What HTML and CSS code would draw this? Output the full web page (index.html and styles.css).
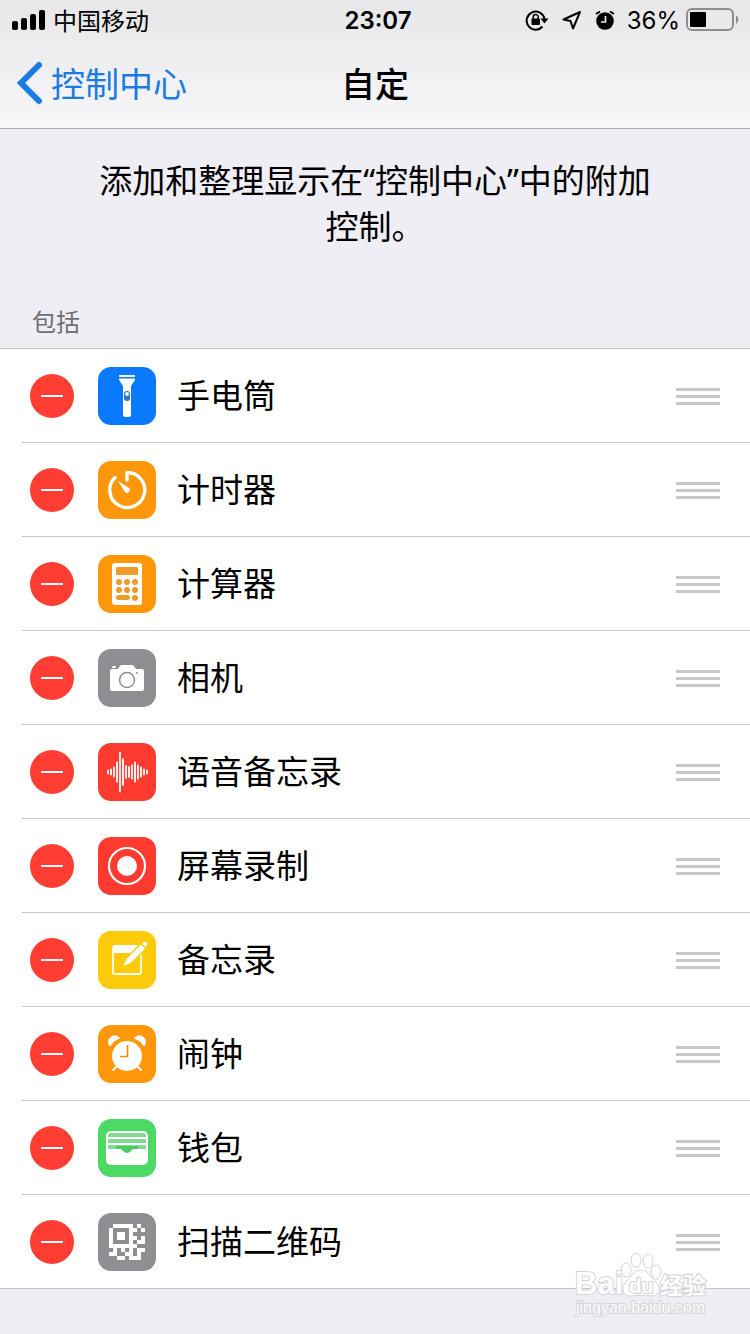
FILE: index.html
```html
<!DOCTYPE html>
<html lang="zh-CN">
<head>
<meta charset="utf-8">
<meta name="viewport" content="width=device-width, initial-scale=1">
<title>自定</title>
<link rel="stylesheet" href="styles.css">
</head>
<body>
<header class="header">
  <div class="status">
    <div class="status-left">
      <svg width="34" height="20" viewBox="0 0 34 20" aria-hidden="true"><rect x="0" y="11" width="6" height="9" rx="2"/><rect x="9" y="8" width="6" height="12" rx="2"/><rect x="18" y="4" width="6" height="16" rx="2"/><rect x="27" y="0" width="6" height="20" rx="2"/></svg>
      <span>中国移动</span>
    </div>
    <time class="clock">23:07</time>
    <div class="status-right">
      <svg width="24" height="22" viewBox="0 0 24 22" aria-hidden="true"><path d="M17.500 17.500A9 9 0 1 1 19.500 10" fill="none" stroke="#000" stroke-width="2"/><path d="M15.500 9.500h8l-4 5z"/><rect x="6.500" y="9.500" width="8.500" height="6.500" rx="1"/><path d="M8.200 10V8a2.500 2.500 0 0 1 5 0v2" fill="none" stroke="#000" stroke-width="1.500"/></svg>
      <svg width="20" height="20" viewBox="0 0 20 20" aria-hidden="true"><path d="M18 2 1.500 9.500 8.500 11 11 18.500z" fill="none" stroke="#000" stroke-width="2" stroke-linejoin="round"/></svg>
      <svg width="20" height="20" viewBox="0 0 20 20" aria-hidden="true"><circle cx="10" cy="11" r="8.800"/><path d="M1 4 5 1.500M19 4 15 1.500" stroke="#000" stroke-width="2"/><path d="M10.500 6v6H6" fill="none" stroke="#eee" stroke-width="1.700"/></svg>
      <span class="percent">36%</span>
      <svg width="54" height="24" viewBox="0 0 54 24" aria-hidden="true"><rect x="1" y="1" width="46" height="21" rx="5" fill="none" stroke="#8e8e90" stroke-width="2"/><rect x="4" y="4" width="16" height="15" rx="1"/><path d="M50 7q5 4.500 0 9z" fill="#8e8e90"/></svg>
    </div>
  </div>
  <nav class="nav">
    <a class="back" href="#">
      <svg width="26" height="44" viewBox="0 0 26 44" aria-hidden="true"><path d="M22 4 4 22 22 40" fill="none" stroke="currentColor" stroke-width="6" stroke-linecap="round"/></svg>
      <span>控制中心</span>
    </a>
    <h1 class="title">自定</h1>
  </nav>
</header>
<main>
  <p class="intro">添加和整理显示在“控制中心”中的附加控制。</p>
  <h2 class="section">包括</h2>
  <ul class="list">
    <li class="row">
      <button class="remove" aria-label="移除手电筒"></button>
      <svg class="icon blue" viewBox="0 0 58 58" aria-hidden="true"><path d="M21 8h16v2H21zM21 11.500h16c0 4-4 5-4 9V48q0 2-2 2h-4q-2 0-2-2V20.500c0-4-4-5-4-9z" fill="#fff"/><rect x="26" y="24" width="6" height="10" rx="3" fill="#2b74c8"/><circle cx="29" cy="27" r="2" fill="#fff"/></svg>
      <span class="name">手电筒</span>
      <button class="handle" aria-label="排序手电筒"></button>
    </li>
    <li class="row">
      <button class="remove" aria-label="移除计时器"></button>
      <svg class="icon orange" viewBox="0 0 58 58" aria-hidden="true"><path d="M29 19v-7.500a17.500 17.500 0 1 1-12 5" fill="none" stroke="#fff" stroke-width="3.400" stroke-linecap="round" stroke-linejoin="round"/><path d="m20 20 11 7a2.800 2.800 0 1 1-4 4z" fill="#fff"/></svg>
      <span class="name">计时器</span>
      <button class="handle" aria-label="排序计时器"></button>
    </li>
    <li class="row">
      <button class="remove" aria-label="移除计算器"></button>
      <svg class="icon orange" viewBox="0 0 58 58" aria-hidden="true"><rect x="14" y="8" width="30" height="42" rx="3" fill="#fff"/><g class="keys"><rect x="18" y="12" width="22" height="8" rx="1"/><circle cx="21" cy="27" r="3"/><circle cx="29" cy="27" r="3"/><circle cx="37" cy="27" r="3"/><circle cx="21" cy="35" r="3"/><circle cx="29" cy="35" r="3"/><circle cx="37" cy="35" r="3"/><rect x="18" y="40" width="14" height="5" rx="2.500"/><circle cx="37" cy="43" r="3"/></g></svg>
      <span class="name">计算器</span>
      <button class="handle" aria-label="排序计算器"></button>
    </li>
    <li class="row">
      <button class="remove" aria-label="移除相机"></button>
      <svg class="icon gray" viewBox="0 0 58 58" aria-hidden="true"><path d="M14 20h6l2-3q.6-1 2-1h10q1.400 0 2 1l2 3h6q2 0 2 2v18q0 2-2 2H14q-2 0-2-2V22q0-2 2-2z" fill="#fff"/><rect x="14" y="17" width="4" height="2" rx="1" fill="#fff"/><circle cx="29" cy="31" r="7.500" fill="none" stroke="#8e8e93" stroke-width="1.500"/><circle cx="39" cy="24" r="1" fill="#8e8e93"/></svg>
      <span class="name">相机</span>
      <button class="handle" aria-label="排序相机"></button>
    </li>
    <li class="row">
      <button class="remove" aria-label="移除语音备忘录"></button>
      <svg class="icon red" viewBox="0 0 58 58" aria-hidden="true"><path d="M10 27.500v3M13 26.500v5M16 24.500v9M19 19.500v19M22 9.500v39M25 16v26M28 23v12M31 24v10M34 22.500v13M37 19.500v19M40 22.500v13M43 24.500v9M46 26.500v5M49 27.500v3" stroke="#fff" stroke-width="1.800" stroke-linecap="round"/></svg>
      <span class="name">语音备忘录</span>
      <button class="handle" aria-label="排序语音备忘录"></button>
    </li>
    <li class="row">
      <button class="remove" aria-label="移除屏幕录制"></button>
      <svg class="icon red" viewBox="0 0 58 58" aria-hidden="true"><circle cx="29" cy="29" r="18" fill="none" stroke="#fff" stroke-width="2.200"/><circle cx="29" cy="29" r="10" fill="#fff"/></svg>
      <span class="name">屏幕录制</span>
      <button class="handle" aria-label="排序屏幕录制"></button>
    </li>
    <li class="row">
      <button class="remove" aria-label="移除备忘录"></button>
      <svg class="icon yellow" viewBox="0 0 58 58" aria-hidden="true"><rect x="15" y="15" width="28" height="28" rx="2" fill="none" stroke="#fff" stroke-width="1.800"/><path d="M15 14h28v8H15z" fill="#fff"/><path d="m25.500 35 3-7L43 13.500l4 4L32.500 32z" fill="#fff" stroke="#fecb0b" stroke-width="3" paint-order="stroke"/><path d="m44 12.500 2-1.500q1-1 2.500.5t.5 2.500l-1.500 2z" fill="#fff"/></svg>
      <span class="name">备忘录</span>
      <button class="handle" aria-label="排序备忘录"></button>
    </li>
    <li class="row">
      <button class="remove" aria-label="移除闹钟"></button>
      <svg class="icon orange" viewBox="0 0 58 58" aria-hidden="true"><circle cx="29" cy="31" r="15" fill="#fff"/><path d="M12 21a6 6 0 0 1 9.500-8q-6.500 2.500-9.500 8zM46 21a6 6 0 0 0-9.500-8q6.500 2.500 9.500 8z" fill="#fff" stroke="#fff"/><path d="m19 41-4 4M39 41l4 4" stroke="#fff" stroke-width="2" stroke-linecap="round"/><path d="M29.500 20v11.500H22" fill="none" stroke="#f08c10" stroke-width="1.700"/></svg>
      <span class="name">闹钟</span>
      <button class="handle" aria-label="排序闹钟"></button>
    </li>
    <li class="row">
      <button class="remove" aria-label="移除钱包"></button>
      <svg class="icon green" viewBox="0 0 58 58" aria-hidden="true"><rect x="9" y="13" width="40" height="32" rx="4" fill="#84d892" stroke="#fff" stroke-width="2"/><path d="M9 21q0-2 3-2h34q3 0 3 2M9 27q0-2 3-2h34q3 0 3 2" fill="none" stroke="#fff" stroke-width="1.800"/><path d="M18 27h22v7H18z" fill="#4ccb62"/><path d="M9 30h13q2 0 3 2 4 4 8 0 1-2 3-2h13v12q0 3-3 3H12q-3 0-3-3z" fill="#fff"/></svg>
      <span class="name">钱包</span>
      <button class="handle" aria-label="排序钱包"></button>
    </li>
    <li class="row">
      <button class="remove" aria-label="移除扫描二维码"></button>
      <svg class="icon gray" viewBox="0 0 58 58" aria-hidden="true"><path d="M15 11h20v24H11V15h4zM15 15v16h16V15zM39 11h4v4h-4zM35 15h4v4h-4zM43 15h4v4h-4zM35 23h4v4h-4zM43 23h4v8h-8v-4h4zM15 35h4v4h-4zM11 39h8v4h-8zM23 35h4v4h-4zM27 39h4v4h-4zM19 43h8v4h-8zM31 35h4v8h-4zM35 31h4v4h-4zM39 35h8v4h-4v4h4-4v4H31v-4h8z" fill="#fff" fill-rule="evenodd"/><path d="M19 19h8v8h-8z" fill="#fff"/></svg>
      <span class="name">扫描二维码</span>
      <button class="handle" aria-label="排序扫描二维码"></button>
    </li>
  </ul>
</main>
<svg class="watermark" width="140" height="68" viewBox="0 0 140 68" role="img" aria-label="Baidu 经验">
  <g class="mark">
    <ellipse cx="54" cy="18" rx="5" ry="7"/><ellipse cx="64" cy="8" rx="5" ry="7"/><ellipse cx="76" cy="9" rx="5" ry="7"/><ellipse cx="84" cy="20" rx="5" ry="7"/>
    <path d="M69 18c8 0 10 8 15 12 6 6 3 14-4 14-4 0-7-1-11-1s-7 1-11 1c-7 0-10-8-4-14 5-4 7-12 15-12z"/>
    <text class="brand" x="3" y="42">Bai</text>
    <text class="du" x="57" y="41">du</text>
    <text class="brand-cn" x="88" y="42">经验</text>
    <text class="site" x="4" y="61">jingyan.baidu.com</text>
  </g>
</svg>
</body>
</html>
```
FILE: styles.css
```css
* {
  box-sizing: border-box;
}

body {
  margin: 0;
  min-height: 100vh;
  position: relative;
  background: #efeef4;
  color: #000;
  font-family: "Noto Sans CJK SC", sans-serif;
}

.header {
  background: linear-gradient(#e7e7e9, #f7f7f9);
  border-bottom: 1px solid #a9a9af;
}

.status {
  display: grid;
  grid-template-columns: 1fr auto 1fr;
  align-items: center;
  height: 40px;
  padding: 0 12px;
  font-size: 24px;
  line-height: 32px;
}

.status-left,
.status-right {
  display: flex;
  align-items: center;
  gap: 7px;
}

.status-right {
  justify-content: flex-end;
  gap: 13px;
  margin-right: -2px;
}

.clock,
.percent {
  padding-top: 2px;
  font-family: Inter, sans-serif;
}

.clock {
  padding-left: 6px;
  font-weight: 600;
}

.percent {
  margin: 0 -7px 0 -1px;
}

.nav {
  display: grid;
  grid-template-columns: 1fr auto 1fr;
  align-items: center;
  height: 88px;
  padding: 0 17px 2px;
  font-size: 34px;
  line-height: 48px;
}

.back {
  display: flex;
  align-items: center;
  gap: 8px;
  color: #1a7ae6;
  text-decoration: none;
}

.title {
  margin: 0;
  font-size: 34px;
  font-weight: 500;
}

.intro {
  margin: 0;
  padding: 29px 92px 0;
  font-family: "Noto Sans", "Noto Sans CJK SC", sans-serif;
  font-size: 33px;
  line-height: 46px;
  text-align: center;
}

.section {
  margin: 0;
  padding: 54px 32px 10px;
  color: #6d6d72;
  font-size: 24px;
  font-weight: 400;
  line-height: 34px;
}

.list {
  margin: 0;
  padding: 0 0 0 22px;
  list-style: none;
  background: #fff;
  border-top: 1px solid #c3c3c7;
  border-bottom: 1px solid #c3c3c7;
}

.row {
  display: flex;
  align-items: center;
  height: 94px;
  padding: 1px 30px 0 8px;
  border-bottom: 1px solid #c8c7cc;
}

.row:last-child {
  height: 93px;
  border-bottom: 0;
}

.remove,
.handle {
  flex: none;
  padding: 0;
  border: 0;
}

.remove {
  display: grid;
  place-items: center;
  width: 44px;
  height: 44px;
  border-radius: 50%;
  background: #ff3d33;
}

.remove::before {
  content: "";
  width: 22px;
  height: 2px;
  background: #fff;
}

.icon {
  flex: none;
  width: 58px;
  height: 58px;
  margin: 0 21px 0 24px;
  border-radius: 13px;
}

.blue { background: #097aff; }
.orange { background: #ff970b; }
.gray { background: #8e8e93; }
.red { background: #ff3b30; }
.yellow { background: #fecb0b; }
.green { background: #4cd964; }

.keys {
  fill: #f09a2a;
}

.name {
  flex: 1;
  padding-bottom: 4px;
  font-size: 33px;
  line-height: 48px;
}

.handle {
  width: 44px;
  height: 17px;
  background: linear-gradient(#c7c7cc 3px, transparent 3px 7px, #c7c7cc 7px 10px, transparent 10px 14px, #c7c7cc 14px);
}

.watermark {
  position: absolute;
  right: 38px;
  bottom: 14px;
}

.mark {
  fill: #fff;
  stroke: #d4d4d8;
  stroke-width: 1px;
}

.mark text {
  paint-order: stroke;
  stroke-width: 2px;
}

.brand {
  font: 700 31px "Liberation Sans", sans-serif;
}

.du {
  font: 700 20px "Liberation Sans", sans-serif;
}

.brand-cn {
  font: 700 23px "Noto Sans CJK SC", sans-serif;
}

.site {
  font: 400 16px "Liberation Sans", sans-serif;
}
```
